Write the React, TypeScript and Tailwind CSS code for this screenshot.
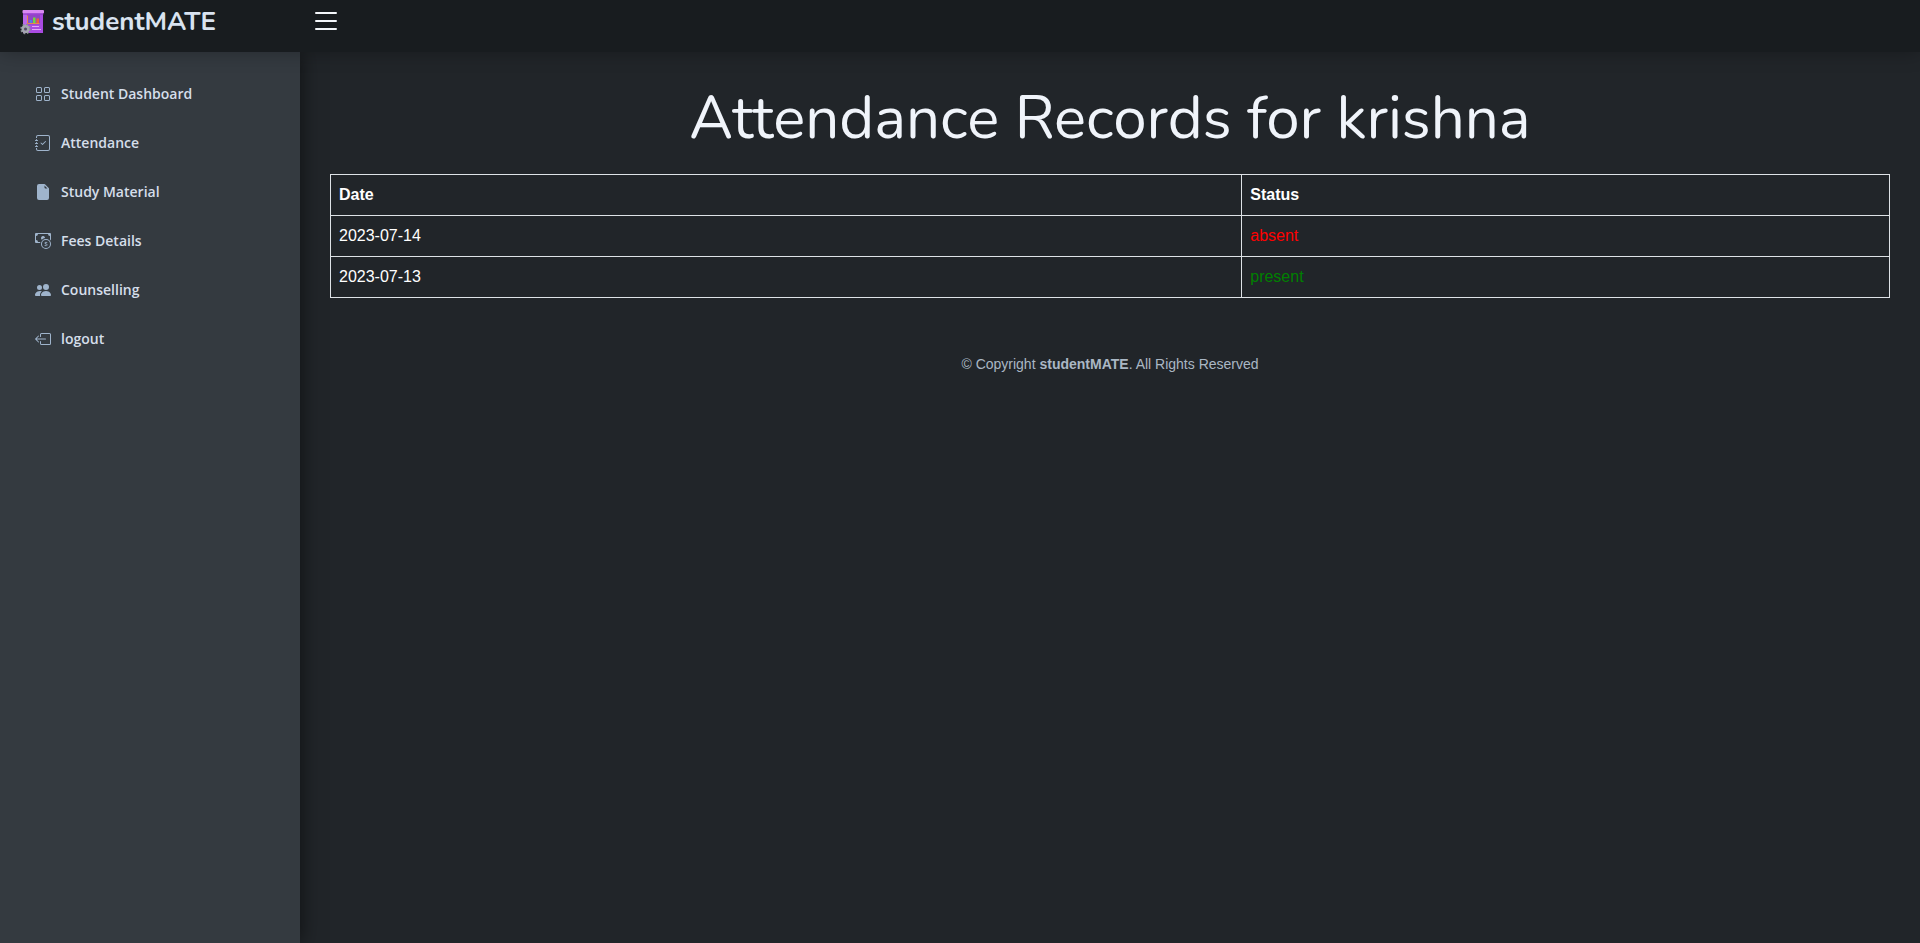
import React from "react";
import {
  BsGrid,
  BsJournalCheck,
  BsFileEarmarkFill,
  BsCashCoin,
  BsPeopleFill,
  BsBoxArrowLeft,
  BsList,
} from "react-icons/bs";
import type { IconType } from "react-icons";

const links: { label: string; icon: IconType }[] = [
  { label: "Student Dashboard", icon: BsGrid },
  { label: "Attendance", icon: BsJournalCheck },
  { label: "Study Material", icon: BsFileEarmarkFill },
  { label: "Fees Details", icon: BsCashCoin },
  { label: "Counselling", icon: BsPeopleFill },
  { label: "logout", icon: BsBoxArrowLeft },
];

const records = [
  { date: "2023-07-14", status: "absent" },
  { date: "2023-07-13", status: "present" },
];

function Logo() {
  return (
    <svg viewBox="0 0 26 26" className="size-[26px] shrink-0" aria-hidden="true">
      <path d="M3 4h20v20H3z" fill="#a94be2" />
      <path d="M3 4h4v20H3z" fill="#bb68ec" />
      <rect x="2.500" y="1" width="21.500" height="3.500" rx="1" fill="#d98af3" />
      <path d="M3 4.500h20.500v1H3z" fill="#8a35c0" />
      <rect x="7" y="6" width="13" height="9.500" fill="#9146c4" />
      <path d="M7.500 6.500v8H19.500" fill="none" stroke="#e8864f" />
      <rect x="9.500" y="11" width="2.500" height="3" fill="#4f7fe8" />
      <rect x="13" y="8.500" width="2.500" height="5.500" fill="#6fdc3c" />
      <rect x="16.500" y="9.500" width="2.500" height="4.500" fill="#f0603c" />
      <path d="M12 17.500h7M12 20.500h9" stroke="#e2a8f8" />
      <circle cx="5.500" cy="20" r="4.300" fill="none" stroke="#8b9096" strokeWidth="2" strokeDasharray="1.800 1.577" />
      <circle cx="5.500" cy="20" r="2.800" fill="none" stroke="#a3a8ae" strokeWidth="2.400" />
      <circle cx="5.500" cy="20" r="1.500" fill="#4d5359" />
    </svg>
  );
}

export default function App() {
  return (
    <div className="flex min-h-screen flex-col bg-[#212529] font-['Liberation_Sans',Arial,sans-serif] text-base text-white">
      <header className="relative z-20 flex h-[52px] items-start bg-[#181c1f] shadow-[0_0_20px_rgba(0,0,0,0.3)]">
        <a href="#" className="flex w-[300px] items-center gap-[6px] pl-5 pt-[5px] text-[#d9e3f0]">
          <Logo />
          <span className="font-['Nunito',Lato,sans-serif] text-[26px] leading-[34px] font-bold">studentMATE</span>
        </a>
        <button type="button" aria-label="Toggle sidebar" className="ml-[10px] mt-[5px] text-[#f4f7fb]">
          <BsList className="size-8" />
        </button>
      </header>

      <div className="flex flex-1">
        <aside className="relative z-10 w-[300px] shrink-0 bg-[#343a40] px-5 pt-5 shadow-[0_0_20px_rgba(0,0,0,0.6)]">
          <nav aria-label="Main">
            <ul className="flex flex-col gap-[5px]">
              {links.map(({ label, icon: Icon }) => (
                <li key={label}>
                  <a
                    href="#"
                    className="flex h-11 items-center gap-[10px] px-[15px] font-['Segoe_UI','Open_Sans',sans-serif] text-sm font-semibold text-[#d5deea]"
                  >
                    <Icon className="size-4 text-[#9fb4cc]" />
                    {label}
                  </a>
                </li>
              ))}
            </ul>
          </nav>
        </aside>

        <div className="flex min-w-0 flex-1 flex-col">
          <main className="px-[30px] pt-[30px]">
            <h1 className="mb-5 text-center font-['Nunito',Lato,sans-serif] text-[60px] leading-[72px] text-[#f0f4fa]">
              Attendance Records for krishna
            </h1>
            <table className="w-full border-collapse">
              <thead>
                <tr>
                  <th className="w-[58.450%] border border-[#dee2e6] p-2 text-left">Date</th>
                  <th className="border border-[#dee2e6] p-2 text-left">Status</th>
                </tr>
              </thead>
              <tbody>
                {records.map((r) => (
                  <tr key={r.date}>
                    <td className="border border-[#dee2e6] p-2">{r.date}</td>
                    <td className={`border border-[#dee2e6] p-2 ${r.status === "absent" ? "text-[#ff0000]" : "text-[#008000]"}`}>
                      {r.status}
                    </td>
                  </tr>
                ))}
              </tbody>
            </table>
          </main>
          <footer className="pt-14 text-center text-sm text-[#aab7c4]">
            © Copyright <strong>studentMATE</strong>. All Rights Reserved
          </footer>
        </div>
      </div>
    </div>
  );
}
